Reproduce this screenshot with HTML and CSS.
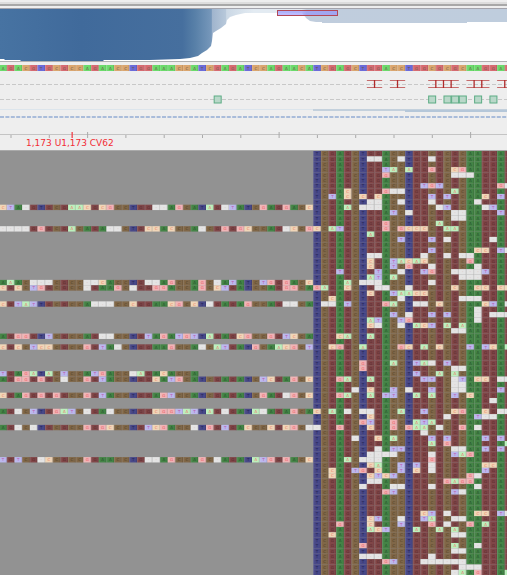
FILE: index.html
```html
<!DOCTYPE html>
<html lang="en">
<head>
<meta charset="utf-8">
<title>Sequence alignment viewer</title>
<link rel="stylesheet" href="styles.css">
</head>
<body>
<main class="viewer">
  <div class="toolbar-edge"></div>
  <section class="overview" aria-label="Coverage overview">
    <svg viewBox="0 0 507 52" preserveAspectRatio="none">
      <defs>
        <linearGradient id="depth" gradientUnits="userSpaceOnUse" x1="0" y1="0" x2="507" y2="0">
          <stop offset="0" stop-color="#4773a2"/>
          <stop offset=".16" stop-color="#406a9b"/>
          <stop offset=".36" stop-color="#466f9e"/>
          <stop offset=".385" stop-color="#5880a8"/>
          <stop offset=".417" stop-color="#7798bb"/>
          <stop offset=".418" stop-color="#9fb4cd"/>
          <stop offset=".445" stop-color="#b7c8da"/>
          <stop offset=".447" stop-color="#cbd8e5"/>
          <stop offset=".5" stop-color="#e3ebf2"/>
          <stop offset=".595" stop-color="#e3ebf2"/>
          <stop offset=".605" stop-color="#c0cddd"/>
          <stop offset="1" stop-color="#bfcddd"/>
        </linearGradient>
      </defs>
      <path fill="url(#depth)" d="M0 0H507V13H467V14H322V13H316L310 12L306 9L302 4L278 4H245L236 6L230 8L227 11L226 15L221 19L216 22L213 24L212 32L211 37L207 41L202 44L198 47L190 49L180 50L150 51H104L103 52H21L20 51H5L4 50H0Z"/>
      <rect x="277.500" y="1.500" width="60" height="5" fill="#8c8cff" fill-opacity=".6" stroke="#b24858"/>
    </svg>
  </section>
  <section class="tracks" aria-label="Feature tracks">
    <svg id="reference" viewBox="0 0 507 7" class="reference" preserveAspectRatio="none"></svg>
    <svg id="features" viewBox="0 0 507 53" class="features" preserveAspectRatio="none"></svg>
  </section>
  <section class="ruler">
    <svg id="ticks" viewBox="0 0 507 10" class="ticks" preserveAspectRatio="none"></svg>
    <p class="position">1,173 U1,173 CV62</p>
  </section>
  <section class="alignment" aria-label="Aligned reads">
    <svg id="reads" viewBox="0 0 507 424" class="reads"></svg>
  </section>
</main>
<script src="reads.js"></script>
</body>
</html>
```
FILE: styles.css
```css
* {
  box-sizing: border-box;
}

body {
  margin: 0;
  background: #929292;
  font-family: "DejaVu Sans", sans-serif;
}

svg {
  display: block;
  width: 100%;
}

.viewer {
  display: flex;
  flex-direction: column;
  overflow: hidden;
}

.toolbar-edge {
  height: 8px;
  background: linear-gradient(#eee 0 2px, #ddd 2px 4px, #a8a8a8 4px 6px, #eee 6px);
}

.overview {
  border-top: 1px solid #a4a4ac;
  border-bottom: 1px solid #b0b0b0;
  background: #fff;
}

.overview svg {
  height: 52px;
}

.tracks {
  padding-top: 3px;
  background: #eee;
}

.reference {
  height: 7px;
}

.features {
  height: 53px;
}

.ruler {
  height: 26px;
  padding-top: 6px;
  border-bottom: 1px solid #aaa;
  background: #eee;
}

.ticks {
  height: 10px;
}

.position {
  margin: -3px 0 0 26px;
  color: #f22c35;
  font-size: 9px;
  line-height: 11px;
}

.alignment {
  background: #929292;
}

.letter {
  font: 4px "DejaVu Sans", sans-serif;
  text-anchor: middle;
}
```
FILE: reads.js
```javascript
const CELL = 7.66;
const LEFT = -0.8;
const ROW = 5.37;
const ROWS = 79;
const WIDTH = 507;

// Upper case: base agrees with the reference; lower case: variant; n: unknown.
const FILL = {
  A: "#448446", C: "#806748", G: "#804648", T: "#484888",
  a: "#bcf0bd", c: "#f0d6b8", g: "#f0b4b6", t: "#bbb8ed", n: "#e4e4e4"
};
const INK = {
  A: "#25502a", C: "#513f26", G: "#55282a", T: "#252558",
  a: "#e8736b", c: "#ea7962", g: "#e8535c", t: "#ba5bae", n: "#d6a4a8"
};
const BRIGHT = { A: "#6bda6b", C: "#daa66f", G: "#d66b71", T: "#6b6bda" };

const REFERENCE = "AGACGTGCGCCAGAACCTGGAAACCATCGAGATCCAGAACATCGAGCTGGACCTGGCGCGCAAGGAG";
const CONSENSUS = "TCGAGCTGGACCTGGCGCGCAAGGAG";
const CONSENSUS_START = 41;

const READS = {
  10: "ctAnGTGCGaacGcgCCTGGnnAgCATaGntATCgAGgACc",
  14: "nnnnGgGCGaCAGAnnCTGccAcCCAnCGgGgcCCAGncCg",
  24: "AaACnnnCGCCnncACCTGnnAgCCAgCnAtATCtgGgACc",
  25: "cGcCtgGCGCCnGAAgCnGGggACCAgCctGATCCAGggCA",
  28: "cGtatTGCGCCAnnnCCcGGAAcgCcTnGAGAgCCAGnnCA",
  34: "AGggGTtCGCCAGnnCCTGtAgAtgtTaGAGcgCCgGtcCA",
  36: "cGcCtccCGCCgGtAnCTGGAAgCCAnCatGATgCAacgCt",
  41: "tGAgaTaCtCCAtgACCnaGAcACCA",
  42: "AGggGgGCnCCgGtACCTGGcAtgCATCGAGATCtcGAgCc",
  45: "cGAgGgGgGCCgGtACCTGGAgtCCATCGAGATCgAGngCc",
  48: "AGnCtTGgatCnGAnCCTGGcggtatTaGnGATanAGAgCA",
  51: "AGnCnTGCGCCgGgcCCTGtcgACCnTgGtGAcCCcGcgCn",
  57: "tGtCGncCGCCgGAACCTGnnAgCCAgCnAGATatgGgACc"
};

// Runs of variants, written as column:bases, counted from the consensus start.
const VARIANTS = {
  1: "7:nn 11:n 15:n", 3: "9:ta 12:a 15:g 18:cg", 4: "9:g 18:nnn",
  6: "14:tgt 24:gn", 7: "4:c 9:gnn 18:a", 8: "2:t 4:c 6:c 8:c 15:t 17:t 22:c 24:t",
  9: "7:nn 11:n 15:n 21:n", 10: "4:a 6:nnn 16:nt 22:nt", 11: "10:t 12:n 18:nn 24:t",
  12: "18:nn", 13: "9:g 16:a", 14: "0:c 2:at 9:g 11:gccc 17:aa", 15: "7:a",
  16: "11:t 15:t 17:n 23:n", 18: "15:t 21:cc 24:tn", 19: "7:nn 14:n 17:n 19:nn",
  20: "7:c 10:tacac 20:g", 21: "7:c 10:t 12:g 15:n 21:n",
  22: "3:t 8:t 11:n 14:tg 18:nnnn 22:t", 23: "7:at 10:a 19:nnn",
  24: "4:a 6:nnn 15:n", 25: "0:ga 4:c 8:nn 12:n 18:c 21:cc 24:cc",
  26: "7:c 10:taacc", 27: "2:c 11:n 19:nnn", 28: "1:nn 4:t 9:ga 13:nn 16:c 22:ct 25:n",
  29: "21:n", 30: "10:t 12:n 15:t 17:t 21:n 23:nnn", 31: "7:at 11:tg 21:n",
  32: "7:cn 11:n 13:act 17:a 19:a", 33: "18:nn", 34: "3:ca 7:a",
  36: "2:cg 6:a 11:gc 14:a 16:c 20:t 22:tc 25:a", 39: "6:g 10:a 13:tan 17:t",
  40: "6:g 18:nn", 41: "13:t 16:a 18:a", 42: "3:ga 7:a 14:tt 18:nt 21:cc 24:nn",
  43: "18:nn", 44: "5:n 7:c 10:t 12:n 15:t 18:nn 24:t",
  45: "3:ga 7:a 9:tt 13:a 15:a 18:t 20:c", 46: "23:n",
  48: "0:c 2:a 4:n 6:nn 11:a 14:t 18:cg 22:c 24:nn", 49: "7:c 17:n 21:tnn",
  50: "6:gt 10:g 13:ata", 51: "0:n 3:g 7:c 10:g 12:gaa 16:n 19:g 21:n", 52: "14:n",
  53: "5:n 8:c 10:a 15:t 17:t 22:t 24:t", 54: "15:a 17:g 25:a",
  55: "8:n 10:tt 18:nn 22:t 24:t", 56: "7:nnnn 15:n 18:tag", 57: "4:a 6:nnn 15:g",
  58: "7:ca 11:t 13:t 15:n 22:cc", 59: "2:c 5:tg 8:c 11:t 13:c 15:n 22:t",
  60: "2:c 7:ctct 20:gn", 61: "7:nn 17:gagg", 62: "6:n 10:nn 15:n 21:n",
  63: "9:gt 18:tn", 67: "14:ct 17:n 21:cc 24:tn", 68: "7:ct 11:n 14:ta 18:nn",
  69: "3:g 7:c 11:t 15:g 17:n 20:g 22:a", 70: "7:act 13:a 16:a 18:a",
  71: "2:c 18:nn", 73: "6:g 18:a 21:n", 74: "18:nn", 75: "6:nnn 15:n",
  76: "9:gt 14:nnnnnn", 77: "19:nnn", 78: "18:na 21:g 25:a"
};

function rect(x, y, w, h, fill, extra = "") {
  return `<rect x="${x.toFixed(2)}" y="${y.toFixed(2)}" width="${w}" height="${h}" fill="${fill}" ${extra}/>`;
}

function line(x1, y1, x2, y2, color, extra = "") {
  return `<path d="M${x1} ${y1}L${x2} ${y2}" stroke="${color}" fill="none" ${extra}/>`;
}

function cell(column, y, height, base, fill, ink) {
  const x = LEFT + column * CELL;
  const letter = base === "n" ? "-" : base.toUpperCase();
  let out = rect(x, y, CELL, height, fill) +
    rect(x, y, 1, height, "#fff", 'opacity=".1"') +
    rect(x + CELL - 1, y, 1, height, "#000", 'opacity=".1"');
  // A letter is drawn only where its whole cell is in view.
  if (x + CELL <= WIDTH) {
    out += `<text class="letter" x="${(x + CELL / 2).toFixed(2)}" y="${(y + height / 2 + 1.5).toFixed(2)}" fill="${ink}">${letter}</text>`;
  }
  return out;
}

function drawReference() {
  return [...REFERENCE].map((b, i) => cell(i, 0, 6, b, BRIGHT[b], "#6b5648")).join("");
}

// Three rows: restriction sites, boxed features, and the coverage band.
function drawFeatures() {
  let out = line(0, 12.5, 507, 12.5, "#c8c8c8", 'stroke-dasharray="4 2"');
  out += line(0, 27.5, 507, 27.5, "#c8c8c8", 'stroke-dasharray="4 2"');
  for (const [from, to, stems] of [[48, 50, [49]], [51, 53, [52]], [56, 60, [57, 58, 59]], [61, 64, [62, 63]], [65, 67, [66]]]) {
    const a = LEFT + from * CELL;
    const b = LEFT + to * CELL;
    out += line(a, 8.5, b, 8.5, "#c66c6c") + line(a, 15.5, b, 15.5, "#c66c6c");
    for (const s of stems) {
      out += line(LEFT + s * CELL, 8, LEFT + s * CELL, 16, "#b02a2a", 'stroke-width="1.3"');
    }
  }
  for (const c of [28, 56, 58, 59, 60, 62, 64]) {
    out += rect(LEFT + c * CELL + 0.5, 24, 7, 7, "#b9d8c9", 'stroke="#5cac84"');
  }
  out += rect(0, 37, 507, 1, "#dce5ec");
  out += rect(313, 37, 194, 2, "#c3d0dc");
  out += rect(405, 38, 102, 2, "#b5c7d9");
  out += line(0, 45, 507, 45, "#93acd3", 'stroke-width="1.6" stroke-dasharray="4 1.4"');
  return out;
}

function drawTicks() {
  let out = rect(0, 3, 507, 1, "#c4c4c4");
  for (let i = 0; i < 13; i++) {
    const major = i % 5 === 2;
    out += rect(10.5 + i * 38.3, major ? 1 : 4, 1, major ? 6 : 3, "#aaa");
  }
  return out + rect(71.5, 1, 1.3, 6, "#f04048");
}

function drawReads() {
  let out = "";
  for (let r = 0; r < ROWS; r++) {
    const left = READS[r] || "";
    const right = [...CONSENSUS];
    for (const run of (VARIANTS[r] || "").split(" ").filter(Boolean)) {
      const [start, bases] = run.split(":");
      [...bases].forEach((b, i) => { right[Number(start) + i] = b; });
    }
    [...left].forEach((b, i) => { out += cell(i, r * ROW, ROW, b, FILL[b], INK[b]); });
    right.slice(0, 26).forEach((b, i) => {
      out += cell(CONSENSUS_START + i, r * ROW, ROW, b, FILL[b], INK[b]);
    });
  }
  return out;
}

document.getElementById("reference").innerHTML = drawReference();
document.getElementById("features").innerHTML = drawFeatures();
document.getElementById("ticks").innerHTML = drawTicks();
document.getElementById("reads").innerHTML = drawReads();
```
